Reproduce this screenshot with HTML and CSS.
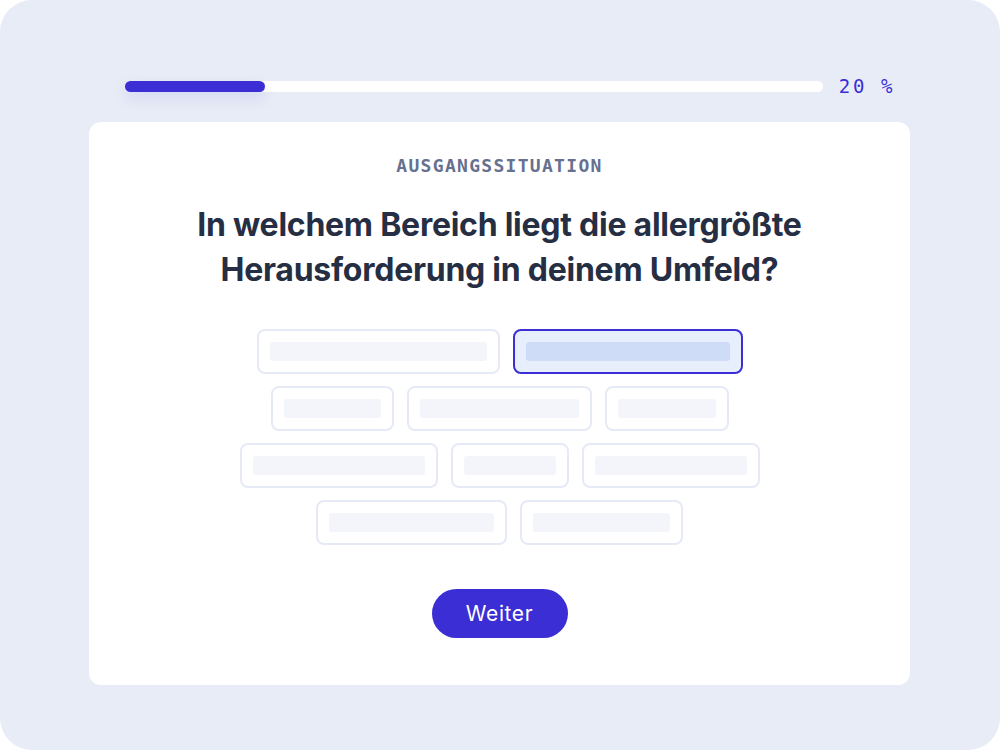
FILE: index.html
```html
<!DOCTYPE html>
<html lang="de">
<head>
  <meta charset="UTF-8">
  <meta name="viewport" content="width=device-width, initial-scale=1.0">
  <title>Ausgangssituation</title>
  <link rel="stylesheet" href="styles.css">
</head>
<body>
  <div class="frame">

    <!-- Progress through the questionnaire -->
    <div class="progress">
      <div class="progress-track">
        <div class="progress-fill" style="width: 20%;"></div>
      </div>
      <span class="progress-label">20 %</span>
    </div>

    <div class="question-card">
      <p class="step-label">AUSGANGSSITUATION</p>
      <h1 class="question">In welchem Bereich liegt die allergrößte<br>Herausforderung in deinem Umfeld?</h1>

      <div class="options">
        <div class="option-row">
          <div class="option"><span class="option-text" style="width: 217px;"></span></div>
          <div class="option selected"><span class="option-text" style="width: 204px;"></span></div>
        </div>
        <div class="option-row">
          <div class="option"><span class="option-text" style="width: 97px;"></span></div>
          <div class="option"><span class="option-text" style="width: 159px;"></span></div>
          <div class="option"><span class="option-text" style="width: 98px;"></span></div>
        </div>
        <div class="option-row">
          <div class="option"><span class="option-text" style="width: 172px;"></span></div>
          <div class="option"><span class="option-text" style="width: 92px;"></span></div>
          <div class="option"><span class="option-text" style="width: 152px;"></span></div>
        </div>
        <div class="option-row">
          <div class="option"><span class="option-text" style="width: 165px;"></span></div>
          <div class="option"><span class="option-text" style="width: 137px;"></span></div>
        </div>
      </div>

      <button class="btn-next">Weiter</button>
    </div>

  </div>
</body>
</html>
```

FILE: styles.css
```css
body {
  margin: 0;
  background-color: #ffffff;
  font-family: Inter, "Noto Sans", sans-serif;
}
.frame {
  width: 1000px;
  height: 750px;
  box-sizing: border-box;
  padding: 74px 90px 0 89px;
  background-color: #e8ecf6;
  border-radius: 32px;
}
.progress {
  display: flex;
  align-items: center;
  height: 24px;
  margin: 0 15px 0 36px;
}
.progress-track {
  flex: 1;
  height: 11px;
  background-color: #ffffff;
  border-radius: 6px;
}
.progress-fill {
  height: 100%;
  background-color: #3b2ed5;
  border-radius: 6px;
  box-shadow: 0 6px 14px rgba(59, 46, 213, 0.12);
}
.progress-label {
  margin-left: 16px;
  font-family: "DejaVu Sans Mono", "Liberation Mono", monospace;
  font-size: 19px;
  letter-spacing: 2.6px;
  color: #3b2ed5;
  line-height: 24px;
}
.question-card {
  margin-top: 24px;
  height: 563px;
  box-sizing: border-box;
  padding-top: 32px;
  background-color: #ffffff;
  border-radius: 12px;
  text-align: center;
}
.step-label {
  margin: 0;
  font-family: "DejaVu Sans Mono", "Liberation Mono", monospace;
  font-weight: bold;
  font-size: 18px;
  line-height: 24px;
  letter-spacing: 1.3px;
  color: #66708f;
}
.question {
  margin: 24px 0 0;
  font-size: 32px;
  line-height: 45px;
  font-weight: 700;
  color: #262e44;
  letter-spacing: -0.25px;
}
.options {
  margin-top: 37px;
  display: flex;
  flex-direction: column;
  gap: 12px;
}
.option-row {
  display: flex;
  justify-content: center;
  gap: 13px;
}
.option {
  padding: 11px;
  border: 2px solid #e6eaf6;
  border-radius: 8px;
  background-color: #ffffff;
}
.option-text {
  display: block;
  height: 19px;
  background-color: #f4f5fa;
  border-radius: 3px;
}
.option.selected {
  border-color: #3b2ed5;
  background-color: #e8effc;
}
.option.selected .option-text {
  background-color: #cedcf8;
}
.btn-next {
  margin-top: 44px;
  width: 136px;
  height: 49px;
  border: none;
  border-radius: 25px;
  background-color: #3b2ed5;
  color: #ffffff;
  font-family: Inter, "Noto Sans", sans-serif;
  font-size: 21px;
  font-weight: 400;
  letter-spacing: 0.6px;
  cursor: pointer;
}
```
